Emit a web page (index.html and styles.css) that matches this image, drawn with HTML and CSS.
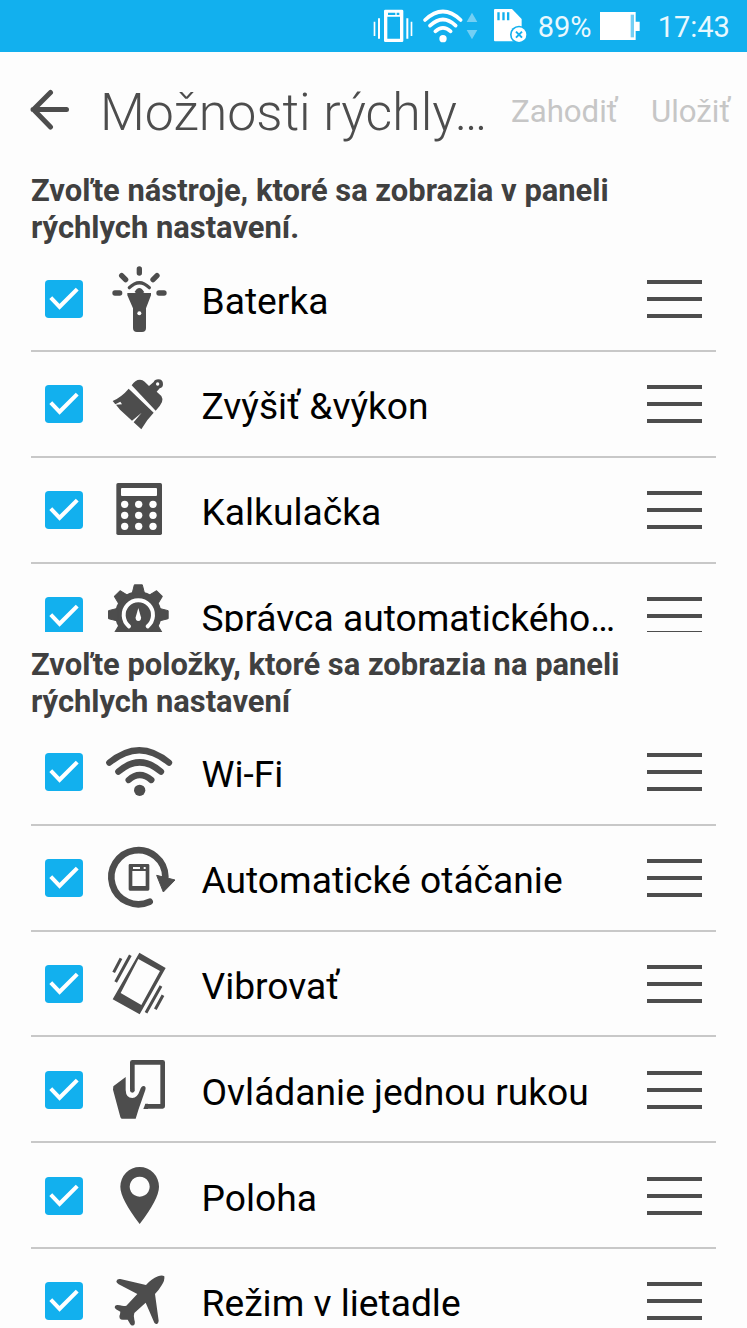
FILE: index.html
```
<!DOCTYPE html>
<html lang="sk">
<head>
  <meta charset="UTF-8">
  <title>Možnosti rýchlych nastavení</title>
  <meta name="viewport" content="width=device-width, initial-scale=1">
  <link rel="stylesheet" href="styles.css">
</head>
<body>

  <!-- shared shapes -->
  <svg class="defs">
    <symbol id="check" viewBox="0 0 112 112">
      <rect width="112" height="112" rx="11" fill="#12b0ee"/>
      <path d="M17 52 L43 79 L95 27" fill="none" stroke="#fff" stroke-width="12"/>
    </symbol>
  </svg>

  <div class="status-bar">
    <svg class="status-icons" viewBox="0 0 500 156">
      <g fill="#fff">
        <path fill-rule="evenodd" d="M76 29h50q4 0 4 4v89q0 4-4 4h-50q-4 0-4-4V33q0-4 4-4zM82 50v66h38V50zM84 38v7h22v-7zM110 38v7h8v-7z"/>
        <path d="M41 65h5v43h-5zM54 55h6v61h-6zM139 55h6v61h-6zM152 65h5v43h-5z"/>
        <circle cx="249" cy="116" r="11"/>
      </g>
      <g fill="none" stroke="#fff" stroke-width="11" stroke-linecap="round">
        <path d="M195 60 Q249 9 302 60"/>
        <path d="M210 77 Q249 40 287 77"/>
        <path d="M226 94 Q249 73 272 94"/>
      </g>
      <path d="M320 66 L336 38 L352 66zM320 90h32L336 118z" fill="#73cff4"/>
      <path d="M405 27h51l29 30v65q0 2-3 2h-77q-3 0-3-3V30q0-3 3-3z" fill="#fff"/>
      <path d="M412 37h7v24h-7zM427 37h7v24h-7zM441 37h7v24h-7z" fill="#12b0ee"/>
      <circle cx="477" cy="104" r="27" fill="#12b0ee"/>
      <circle cx="477" cy="104" r="22" fill="#fff"/>
      <path d="M468 95l18 18M486 95l-18 18" stroke="#12b0ee" stroke-width="6"/>
    </svg>
    <span class="percent">89%</span>
    <svg class="battery" viewBox="0 0 120 84">
      <path d="M0 0h107v29h12v28h-12v27H0z" fill="#fff"/>
      <path d="M92 8h10v68h-10z" fill="#73cff4"/>
    </svg>
    <span class="time">17:43</span>
  </div>

  <header>
    <svg class="back" viewBox="0 0 40 42">
      <path d="M36.500 20.500H3M20.500 3.500L3.500 20.500L20.500 38" fill="none" stroke="#4d4d4d" stroke-width="5" stroke-linecap="round" stroke-linejoin="round"/>
    </svg>
    <h1>Možnosti rýchly…</h1>
    <span class="action discard">Zahodiť</span>
    <span class="action">Uložiť</span>
  </header>

  <h2>Zvoľte nástroje, ktoré sa zobrazia v paneli rýchlych nastavení.</h2>
  <div class="list tools">
    <div class="row">
      <svg class="check"><use href="#check"/></svg>
      <svg class="icon" viewBox="222 24 216 216">
        <g fill="none" stroke="#4d4d4d" stroke-width="16" stroke-linecap="round">
          <path d="M328 42v12M275 62l12 12M381 62l-12 12M255 114h14M387 114h15"/>
          <path d="M298 98Q328 68 358 98" stroke-width="10"/>
        </g>
        <path d="M292 114h25q-2-4-4-2Q328 86 343 112l-4 2h24v7l-15 39v59q0 12-12 12h-15q-12 0-12-12v-59l-17-39z"/>
        <circle cx="328" cy="175" r="6" fill="#fff"/>
      </svg>
      <span class="name">Baterka</span>
      <span class="drag"></span>
    </div>
    <div class="row">
      <svg class="check"><use href="#check"/></svg>
      <svg class="icon" viewBox="222 27 216 216">
        <path d="M305 79q10-17 25-17 8 0 14 6l13 13 14-12q3-8 14-8 14 0 14 15 0 10-10 12l-9 10 14 13q5 7 2 18-6 14-19 26z"/>
        <circle cx="383" cy="75" r="5" fill="#fff"/>
        <path d="M296 89l75 72q-21 21-37 50l-23-21 24-29-29 24-36-33-12-15 18-1-5-8-15 8-8-10q28-13 48-37z"/>
      </svg>
      <span class="name">Zvýšiť &amp;výkon</span>
      <span class="drag"></span>
    </div>
    <div class="row">
      <svg class="check"><use href="#check"/></svg>
      <svg class="icon" viewBox="222 30 216 216">
        <rect x="259" y="57" width="137" height="156" rx="5"/>
        <g fill="#fff">
          <rect x="273" y="72" width="108" height="24" rx="3"/>
          <circle cx="284" cy="121" r="11"/><circle cx="326" cy="121" r="11"/><circle cx="369" cy="121" r="11"/>
          <circle cx="284" cy="154" r="11"/><circle cx="326" cy="154" r="11"/><circle cx="369" cy="154" r="11"/>
          <circle cx="284" cy="187" r="11"/><circle cx="326" cy="187" r="11"/><circle cx="369" cy="187" r="11"/>
        </g>
      </svg>
      <span class="name">Kalkulačka</span>
      <span class="drag"></span>
    </div>
    <div class="row">
      <svg class="check"><use href="#check"/></svg>
      <svg class="icon" viewBox="222 348 216 216">
        <circle cx="325" cy="452" r="70"/>
        <g stroke="#4d4d4d" stroke-width="3" stroke-linejoin="round">
          <path id="tooth" d="M306 390L313 362.500H337L344 390z"/>
          <use href="#tooth" transform="rotate(45 325 452)"/>
          <use href="#tooth" transform="rotate(90 325 452)"/>
          <use href="#tooth" transform="rotate(135 325 452)"/>
          <use href="#tooth" transform="rotate(180 325 452)"/>
          <use href="#tooth" transform="rotate(225 325 452)"/>
          <use href="#tooth" transform="rotate(270 325 452)"/>
          <use href="#tooth" transform="rotate(315 325 452)"/>
        </g>
        <path d="M297 487a44 44 0 1 1 56 0" fill="none" stroke="#fff" stroke-width="12" stroke-linecap="round"/>
        <path d="M325 432l8 28q1 11-8 11t-8-11z" fill="#fff"/>
      </svg>
      <span class="name">Správca automatického…</span>
      <span class="drag"></span>
    </div>
  </div>

  <h2>Zvoľte položky, ktoré sa zobrazia na paneli rýchlych nastavení</h2>
  <div class="list">
    <div class="row">
      <svg class="check"><use href="#check"/></svg>
      <svg class="icon" viewBox="222 21 216 216">
        <g fill="none" stroke="#4d4d4d" stroke-width="19" stroke-linecap="round">
          <path d="M238 101Q328 26 417 101"/>
          <path d="M265 128Q329 72 393 128"/>
          <path d="M296 153Q329 123 364 153"/>
        </g>
        <circle cx="329" cy="184" r="17"/>
      </svg>
      <span class="name">Wi-Fi</span>
      <span class="drag"></span>
    </div>
    <div class="row">
      <svg class="check"><use href="#check"/></svg>
      <svg class="icon" viewBox="222 339 216 216">
        <path d="M359 518A81 81 0 1 1 406 443" fill="none" stroke="#4d4d4d" stroke-width="20" stroke-linecap="round"/>
        <path d="M380 439l55 14-35 36z" stroke="#4d4d4d" stroke-width="3" stroke-linejoin="round"/>
        <path fill-rule="evenodd" d="M300 405h54q4 0 4 4v72q0 4-4 4h-54q-4 0-4-4v-72q0-4 4-4zM307 426v45h40v-45zM309 414v6h21v-6zM341 414v6h6v-6z"/>
      </svg>
      <span class="name">Automatické otáčanie</span>
      <span class="drag"></span>
    </div>
    <div class="row">
      <svg class="check"><use href="#check"/></svg>
      <svg class="icon" viewBox="222 57 216 216">
        <path fill-rule="evenodd" d="M328 71l79 46-78 139-81-45zM325 90l-53 102 62 36 56-102z"/>
        <path d="M273 88l-22 42M301 79l-44 80M393 171l-45 80M399 199l-23 42" fill="none" stroke="#4d4d4d" stroke-width="9"/>
      </svg>
      <span class="name">Vibrovať</span>
      <span class="drag"></span>
    </div>
    <div class="row">
      <svg class="check"><use href="#check"/></svg>
      <svg class="icon" viewBox="222 373 216 216">
        <path d="M307 480V398H398V530H346" fill="none" stroke="#4d4d4d" stroke-width="14" stroke-linejoin="round"/>
        <circle cx="307" cy="482" r="7"/>
        <path d="M346 522h8v16h-14z"/>
        <path d="M250 470l37-28v39q1 24 20 24 15 0 23-24 4-13 12-12 7 2 4 12l-20 57-9 29h-42q-3-1-4-5l-22-82z"/>
      </svg>
      <span class="name">Ovládanie jednou rukou</span>
      <span class="drag"></span>
    </div>
    <div class="row">
      <svg class="check"><use href="#check"/></svg>
      <svg class="icon" viewBox="222 60 216 216">
        <path fill-rule="evenodd" d="M329 252Q271 176 271 140A58 59 0 0 1 387 140Q387 176 329 252zM329 110a30 30 0 1 0 .1 0z"/>
      </svg>
      <span class="name">Poloha</span>
      <span class="drag"></span>
    </div>
    <div class="row">
      <svg class="check"><use href="#check"/></svg>
      <svg class="icon" viewBox="222 378 216 216">
        <path d="M348 438q16-18 36-26 12-5 19 0 2 12-8 27-8 14-20 26l11 80q-1 10-8 10-5 0-7-8l-24-56-34 31q-3 8 0 20 4 12-2 17-7 3-11-5l-7-12h-10q-10 2-14-4-3-5 1-12l1-8-13-7q-6-5-3-10 4-5 15-2 11 4 19 1l33-35-56-29q-7-4-7-9 3-9 12-7z"/>
      </svg>
      <span class="name">Režim v lietadle</span>
      <span class="drag"></span>
    </div>
  </div>

</body>
</html>
```
FILE: styles.css
```
* {
  box-sizing: border-box;
}

body {
  margin: 0;
  height: 1328px;
  overflow: hidden;
  background-color: #fdfdfd;
  font-family: Roboto, "Noto Sans", sans-serif;
}

svg {
  display: block;
  flex-shrink: 0;
}

.defs {
  display: none;
}

/* ===== STATUS BAR ===== */
.status-bar {
  display: flex;
  align-items: center;
  height: 52px;
  padding-left: 360px;
  background-color: #12b0ee;
  color: #e9f8fe;
  font-size: 29px;
  white-space: nowrap;
}

.status-icons {
  width: 166.67px;
  height: 52px;
}

.percent {
  width: 62px;
  margin-left: 11px;
  padding-top: 2px;
}

.battery {
  width: 40px;
  height: 28px;
}

.time {
  margin-left: 18px;
  padding-top: 2px;
}

/* ===== TITLE ===== */
header {
  display: flex;
  align-items: center;
  height: 120px;
  padding: 0 16px 0 30px;
  white-space: nowrap;
}

.back {
  width: 40px;
  height: 42px;
  margin-bottom: 4px;
}

h1 {
  width: 410px;
  margin: 0;
  padding-left: 30px;
  color: #4d4d4d;
  font-size: 51.8px;
  font-weight: 300;
}

.action {
  padding-bottom: 2px;
  color: #c6c6c6;
  font-size: 31.2px;
}

.discard {
  width: 140px;
  margin-left: 31px;
}

h2 {
  height: 74px;
  margin: 0;
  padding: 0 31px;
  color: #404040;
  font-size: 30.9px;
  font-weight: bold;
  line-height: 37px;
}

/* ===== LISTS ===== */
.list {
  margin: 0 31px;
}

.tools {
  height: 386px;
  margin-bottom: 14px;
  padding-top: 0.3px;
  overflow: hidden;
}

.row {
  display: flex;
  align-items: center;
  height: 105.8px;
  padding: 1px 14px 0;
  border-bottom: 2px solid #c8c8c8;
}

.check {
  width: 38px;
  height: 38px;
}

.icon {
  width: 72px;
  height: 72px;
  margin-left: 21px;
  fill: #4d4d4d;
}

.name {
  flex: 1;
  padding: 4px 0 0 25.5px;
  color: #000;
  font-size: 37.2px;
  white-space: nowrap;
}

.drag {
  width: 55px;
  height: 38px;
  border-top: 4px solid #4d4d4d;
  border-bottom: 4px solid #4d4d4d;
  background: linear-gradient(#4d4d4d, #4d4d4d) center / 100% 4px no-repeat;
}
```
